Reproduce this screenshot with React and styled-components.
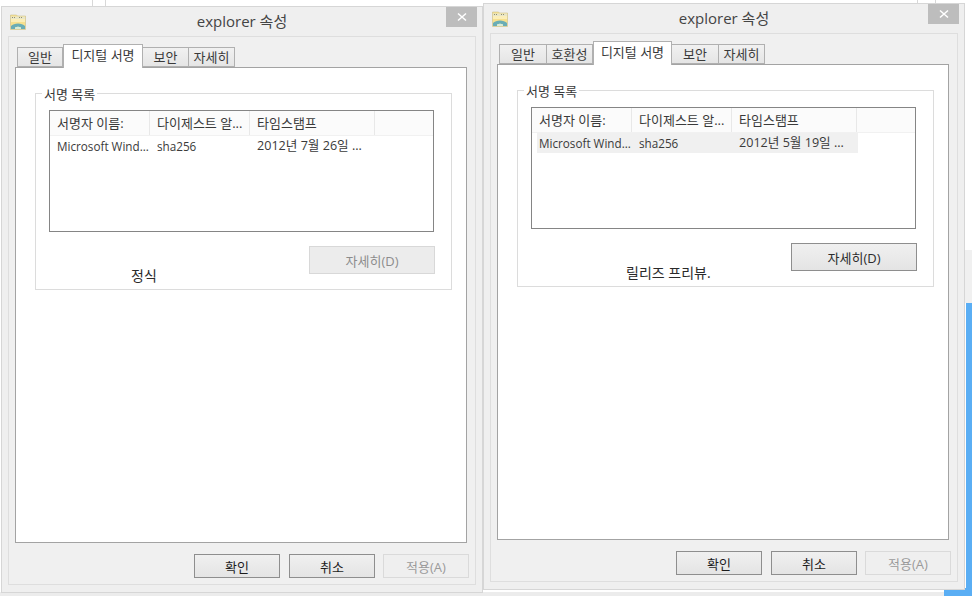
import React from 'react';
import styled, { createGlobalStyle } from 'styled-components';

const GlobalStyle = createGlobalStyle`
  html, body {
    margin: 0;
    padding: 0;
    background: #fff;
  }
  * {
    box-sizing: border-box;
  }
`;

const Desktop = styled.div`
  position: relative;
  width: 972px;
  height: 596px;
  overflow: hidden;
  background: #fff;
  font-family: 'Open Sans', 'Noto Sans CJK KR', sans-serif;
  font-size: 13px;
  color: #3a3a3a;
`;

const BackdropBlock = styled.div`
  position: absolute;
  left: ${({ $left }) => $left}px;
  top: ${({ $top }) => $top}px;
  width: ${({ $width }) => $width}px;
  height: ${({ $height }) => $height}px;
  background: ${({ $color }) => $color};
`;

const Window = styled.div`
  position: absolute;
  left: ${({ $left }) => $left}px;
  top: ${({ $top }) => $top}px;
  width: 482px;
  height: 587px;
  display: flex;
  flex-direction: column;
  padding: 0 6px 7px;
  background: #efefef;
  border: 1px solid #d6d6d6;
`;

const TitleBar = styled.div`
  display: grid;
  grid-template-columns: 1fr auto 1fr;
  height: 29px;
  flex: none;
`;

const FolderIcon = styled.svg`
  width: 16px;
  height: 16px;
  margin: 7px 0 0 2px;
`;

const Title = styled.div`
  font-size: 15px;
  line-height: 28px;
  color: #444;
`;

const CloseButton = styled.div`
  justify-self: end;
  width: 31px;
  height: 20px;
  margin-right: -1px;
  display: flex;
  align-items: center;
  justify-content: center;
  background: #bdbdbd;
`;

const Client = styled.div`
  flex: 1;
  display: flex;
  flex-direction: column;
  padding: 7px 8px 6px 6px;
  background: #f0f0f0;
  border: 1px solid #dedede;
`;

const TabStrip = styled.div`
  display: flex;
  align-items: flex-end;
  height: 23px;
  flex: none;
  padding-left: 2px;
  position: relative;
  z-index: 1;
`;

const Tab = styled.div`
  width: ${({ $width }) => $width}px;
  height: ${({ $active }) => ($active ? 24 : 20)}px;
  margin-bottom: ${({ $active }) => ($active ? -1 : 0)}px;
  padding-bottom: ${({ $active }) => ($active ? 5 : 1)}px;
  display: flex;
  align-items: center;
  justify-content: center;
  white-space: nowrap;
  background: ${({ $active }) => ($active ? '#fff' : 'linear-gradient(#f1f1f1, #e5e5e5)')};
  border: 1px solid #b0b0b0;
  border-bottom: ${({ $active }) => ($active ? 'none' : '1px solid #b0b0b0')};
  border-left: ${({ $active }) => ($active ? '1px solid #b0b0b0' : 'none')};
  &:first-child {
    border-left: 1px solid #b0b0b0;
  }
`;

const TabPage = styled.div`
  height: 476px;
  flex: none;
  padding: 25px 14px 0 19px;
  background: #fff;
  border: 1px solid #a3a3a3;
`;

const Group = styled.div`
  position: relative;
  width: 417px;
  height: 197px;
  padding: 16px 0 0 13px;
  border: 1px solid #dcdcdc;
`;

const GroupLabel = styled.div`
  position: absolute;
  left: 6px;
  top: -9px;
  padding: 0 2px;
  line-height: 18px;
  background: #fff;
`;

const SignatureList = styled.div`
  width: 385px;
  height: 122px;
  border: 1px solid #858585;
`;

const HeaderRow = styled.div`
  display: grid;
  grid-template-columns: 100px 100px 125px 1fr;
  height: 25px;
  background: #fbfbfb;
  border-bottom: 1px solid #f1f1f1;
`;

const HeaderCell = styled.div`
  padding-left: 7px;
  line-height: 24px;
  white-space: nowrap;
  border-right: 1px solid #e8e8e8;
  &:last-child {
    border-right: none;
  }
`;

const SignatureRow = styled.div`
  display: grid;
  grid-template-columns: 95px 100px 126px;
  width: 321px;
  height: 20px;
  margin-left: 5px;
  background: ${({ $selected }) => ($selected ? '#f0f0f0' : 'transparent')};
`;

const RowCell = styled.div`
  padding-left: 7px;
  line-height: 20px;
  font-size: ${({ $date }) => ($date ? 12.6 : 11.7)}px;
  white-space: nowrap;
  &:first-child {
    padding-left: 2px;
  }
`;

const ButtonRow = styled.div`
  display: flex;
  justify-content: flex-end;
  width: 386px;
  margin-top: 14px;
`;

const DetailsButton = styled.div`
  width: 126px;
  height: 28px;
  display: flex;
  align-items: center;
  justify-content: center;
  color: ${({ $disabled }) => ($disabled ? '#8c8c8c' : '#2c2c2c')};
  background: ${({ $disabled }) => ($disabled ? '#ececec' : 'linear-gradient(#f0f0f0, #e4e4e4)')};
  border: 1px solid ${({ $disabled }) => ($disabled ? '#d8d8d8' : '#8e8e8e')};
`;

const Caption = styled.div`
  position: absolute;
  left: ${({ $left }) => $left}px;
  top: 172px;
  font-size: 14px;
  line-height: 20px;
  white-space: nowrap;
  color: #2a2a2a;
`;

const Footer = styled.div`
  display: flex;
  justify-content: flex-end;
  gap: 9px;
  margin: 11px -2px 0 0;
`;

const FooterButton = styled.div`
  width: 86px;
  height: 24px;
  margin-left: ${({ $disabled }) => ($disabled ? -1 : 0)}px;
  display: flex;
  align-items: center;
  justify-content: center;
  color: ${({ $disabled }) => ($disabled ? '#9a9a9a' : '#1c1c1c')};
  background: ${({ $disabled }) => ($disabled ? '#efefef' : 'linear-gradient(#f0f0f0, #e4e4e4)')};
  border: 1px solid ${({ $disabled }) => ($disabled ? '#dadada' : '#8e8e8e')};
`;

function Folder() {
  return (
    <FolderIcon viewBox="0 0 16 16">
      <path d="M0.5 1h6l1 1h8v13.500H0.500z" fill="#f7e08e" stroke="#c9c08a" strokeWidth="0.6" />
      <rect x="1" y="2.500" width="14" height="2.500" fill="#e9e6c8" />
      <path d="M2 3.500h1M4 3.500h1M9 3.500h1M11 3.500h1" stroke="#8f8f70" strokeWidth="1" />
      <rect x="1" y="5" width="14" height="3" fill="#fbeeb8" />
      <path d="M1 15v-3c3-3.500 11-3.500 14 0v3h-4v-1.500c-1.500-1-4.500-1-6 0V15z" fill="#6aadb6" />
      <path d="M5 15v-1.500c1.500-1 4.500-1 6 0V15z" fill="#d8ecd8" />
    </FolderIcon>
  );
}

function PropertiesWindow({ left, top, tabs, selected, disabled, captionLeft, caption, date }) {
  return (
    <Window $left={left} $top={top}>
      <TitleBar>
        <Folder />
        <Title>explorer 속성</Title>
        <CloseButton>
          <svg width="10" height="10" viewBox="0 0 10 10">
            <path d="M1 1.500l8 7M9 1.500l-8 7" stroke="#fff" strokeWidth="1.500" />
          </svg>
        </CloseButton>
      </TitleBar>
      <Client>
        <TabStrip>
          {tabs.map((tab) => (
            <Tab key={tab.label} $width={tab.width} $active={tab.active}>
              {tab.label}
            </Tab>
          ))}
        </TabStrip>
        <TabPage>
          <Group>
            <GroupLabel>서명 목록</GroupLabel>
            <SignatureList>
              <HeaderRow>
                <HeaderCell>서명자 이름:</HeaderCell>
                <HeaderCell>다이제스트 알...</HeaderCell>
                <HeaderCell>타임스탬프</HeaderCell>
                <HeaderCell />
              </HeaderRow>
              <SignatureRow $selected={selected}>
                <RowCell>Microsoft Wind...</RowCell>
                <RowCell>sha256</RowCell>
                <RowCell $date>{date}</RowCell>
              </SignatureRow>
            </SignatureList>
            <ButtonRow>
              <DetailsButton $disabled={disabled}>자세히(D)</DetailsButton>
            </ButtonRow>
            <Caption $left={captionLeft}>{caption}</Caption>
          </Group>
        </TabPage>
        <Footer>
          <FooterButton>확인</FooterButton>
          <FooterButton>취소</FooterButton>
          <FooterButton $disabled>적용(A)</FooterButton>
        </Footer>
      </Client>
    </Window>
  );
}

const leftTabs = [
  { label: '일반', width: 46 },
  { label: '디지털 서명', width: 80, active: true },
  { label: '보안', width: 46 },
  { label: '자세히', width: 46 },
];

const rightTabs = [
  { label: '일반', width: 48 },
  { label: '호환성', width: 46 },
  { label: '디지털 서명', width: 79, active: true },
  { label: '보안', width: 47 },
  { label: '자세히', width: 46 },
];

export default function App() {
  return (
    <Desktop>
      <GlobalStyle />
      <BackdropBlock $left={92} $top={0} $width={1} $height={6} $color="#d8d8d8" />
      <BackdropBlock $left={105} $top={0} $width={1} $height={6} $color="#d8d8d8" />
      <BackdropBlock $left={917} $top={0} $width={1} $height={3} $color="#d8d8d8" />
      <BackdropBlock $left={935} $top={0} $width={1} $height={3} $color="#d8d8d8" />
      <BackdropBlock $left={965} $top={250} $width={7} $height={53} $color="#f0f0f0" />
      <BackdropBlock $left={966} $top={303} $width={6} $height={293} $color="#5aaef4" />
      <BackdropBlock $left={0} $top={592} $width={944} $height={4} $color="#ececec" />
      <BackdropBlock $left={944} $top={588} $width={28} $height={8} $color="#5aaef4" />
      <PropertiesWindow
        left={1}
        top={6}
        tabs={leftTabs}
        disabled
        captionLeft={95}
        caption="정식"
        date="2012년 7월 26일 ..."
      />
      <PropertiesWindow
        left={483}
        top={3}
        tabs={rightTabs}
        selected
        captionLeft={108}
        caption="릴리즈 프리뷰."
        date="2012년 5월 19일 ..."
      />
    </Desktop>
  );
}
